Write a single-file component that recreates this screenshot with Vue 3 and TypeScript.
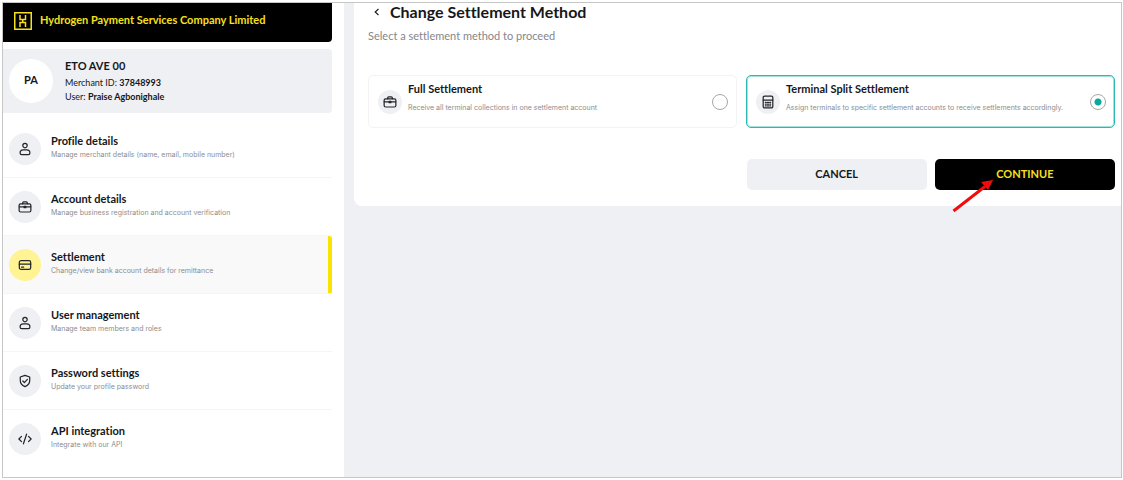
<script setup lang="ts">
import { ref } from 'vue'

type IconName = 'person' | 'briefcase' | 'card' | 'shield' | 'code' | 'calculator'

interface MenuItem {
  title: string
  note: string
  icon: IconName
}

interface Method {
  id: string
  title: string
  note: string
  icon: IconName
}

const menu: MenuItem[] = [
  { title: 'Profile details', note: 'Manage merchant details (name, email, mobile number)', icon: 'person' },
  { title: 'Account details', note: 'Manage business registration and account verification', icon: 'briefcase' },
  { title: 'Settlement', note: 'Change/view bank account details for remittance', icon: 'card' },
  { title: 'User management', note: 'Manage team members and roles', icon: 'person' },
  { title: 'Password settings', note: 'Update your profile password', icon: 'shield' },
  { title: 'API integration', note: 'Integrate with our API', icon: 'code' },
]

const methods: Method[] = [
  { id: 'full', title: 'Full Settlement', note: 'Receive all terminal collections in one settlement account', icon: 'briefcase' },
  { id: 'split', title: 'Terminal Split Settlement', note: 'Assign terminals to specific settlement accounts to receive settlements accordingly.', icon: 'calculator' },
]

const icons: Record<IconName, string[]> = {
  person: [
    'M8 1.6a2.5 2.5 0 1 0 0 5a2.5 2.5 0 1 0 0-5z',
    'M6 9h4c2.200 0 3.600 1.600 3.600 3.500 0 1-.8 1.800-1.800 1.800H4.200c-1 0-1.800-.8-1.800-1.800C2.400 10.600 3.800 9 6 9z',
  ],
  briefcase: [
    'M3 4.300h10a1.700 1.700 0 0 1 1.700 1.700v6a1.700 1.700 0 0 1-1.700 1.700H3A1.700 1.700 0 0 1 1.300 12V6A1.700 1.700 0 0 1 3 4.300z',
    'M5.300 4.300V3.500c0-.8.6-1.300 1.300-1.300h2.800c.7 0 1.300.5 1.300 1.300v.8',
    'M1.500 7.800h13M7 7.400h2v1.400H7z',
  ],
  card: [
    'M3.500 3h9a2 2 0 0 1 2 2v6a2 2 0 0 1-2 2h-9a2 2 0 0 1-2-2V5a2 2 0 0 1 2-2z',
    'M1.500 7h13M4 10.300h2.500',
  ],
  shield: [
    'M8 1.500l5.400 1.900v4c0 3.200-2 5.700-5.400 7.100-3.400-1.400-5.400-3.900-5.400-7.100v-4z',
    'M5.500 8l1.800 1.800 3.400-3.600',
  ],
  code: ['M4 5L1 8l3 3M12 5l3 3-3 3M9.800 2.500l-3.600 11'],
  calculator: [
    'M4 1.300h8a1.500 1.500 0 0 1 1.500 1.500v10.400a1.500 1.500 0 0 1-1.500 1.500H4a1.500 1.500 0 0 1-1.500-1.500V2.800A1.500 1.500 0 0 1 4 1.300z',
    'M2.500 5.800h11M5 8.500h1M7.500 8.500h1M10 8.500h1M5 10.500h1M7.500 10.500h1M10 10.500h1M5 12.500h1M7.500 12.500h1M10 12.500h1',
  ],
}

const active = ref('Settlement')
const selected = ref('split')
</script>

<template>
  <div class="page">
    <div class="frame">
      <aside class="sidebar">
        <header class="brand">
          <svg class="logo" viewBox="0 0 18 18" aria-hidden="true">
            <rect x="0.75" y="0.75" width="16.5" height="16.5" />
            <path d="M6 3v4.500h5.500V3M6 15v-4.500h5.500V15M8.750 7.500v3" />
          </svg>
          <span>Hydrogen Payment Services Company Limited</span>
        </header>

        <section class="merchant">
          <div class="avatar">PA</div>
          <div class="merchant-text">
            <h2>ETO AVE 00</h2>
            <p>Merchant ID: <b>37848993</b></p>
            <p>User: <b>Praise Agbonighale</b></p>
          </div>
        </section>

        <nav class="menu">
          <button
            v-for="item in menu"
            :key="item.title"
            type="button"
            class="menu-item"
            :class="{ active: active === item.title }"
            @click="active = item.title"
          >
            <span class="badge">
              <svg class="icon" viewBox="0 0 16 16" aria-hidden="true">
                <path v-for="d in icons[item.icon]" :key="d" :d="d" />
              </svg>
            </span>
            <span class="menu-text">
              <span class="title">{{ item.title }}</span>
              <span class="note">{{ item.note }}</span>
            </span>
          </button>
        </nav>
      </aside>

      <main class="content">
        <section class="panel">
          <div class="heading">
            <button type="button" class="back" aria-label="Back">
              <svg viewBox="0 0 8 8" aria-hidden="true"><path d="M5.500 1L2.200 4l3.300 3" /></svg>
            </button>
            <h1>Change Settlement Method</h1>
          </div>
          <p class="lead">Select a settlement method to proceed</p>

          <div class="methods">
            <label
              v-for="m in methods"
              :key="m.id"
              class="method"
              :class="{ chosen: selected === m.id }"
              :for="m.id"
            >
              <span class="badge small">
                <svg class="icon" viewBox="0 0 16 16" aria-hidden="true">
                  <path v-for="d in icons[m.icon]" :key="d" :d="d" />
                </svg>
              </span>
              <span class="method-text">
                <span class="title">{{ m.title }}</span>
                <span class="note">{{ m.note }}</span>
              </span>
              <input :id="m.id" v-model="selected" type="radio" name="method" :value="m.id" />
            </label>
          </div>

          <div class="actions">
            <button type="button" class="btn cancel">CANCEL</button>
            <div class="continue-wrap">
              <button type="button" class="btn continue">CONTINUE</button>
              <svg class="pointer" viewBox="0 0 42 34" aria-hidden="true">
                <path d="M1.500 32L33 7.500" />
                <polygon points="41,1 36,11 29,3" />
              </svg>
            </div>
          </div>
        </section>
      </main>
    </div>
  </div>
</template>

<style>
body {
  margin: 0;
}
</style>

<style scoped>
* {
  box-sizing: border-box;
}
.page {
  min-height: 100vh;
  display: flex;
  padding: 2px 1px 2px 2px;
  background: #fff;
  color: #16171a;
  font-family: Lato, "Liberation Sans", sans-serif;
  font-variant-ligatures: none;
}
h1,
h2,
p {
  margin: 0;
}
button {
  font: inherit;
  color: inherit;
  border: 0;
  padding: 0;
  cursor: pointer;
}
.frame {
  flex: 1;
  display: flex;
  border: 1px solid #c6c6c6;
  background: #eff0f3;
}
.sidebar {
  flex: 0 0 341px;
  padding-right: 12px;
  background: #fff;
}
.brand {
  height: 39px;
  display: flex;
  align-items: center;
  gap: 8px;
  padding: 0 11px 4px;
  border-radius: 0 0 4px 0;
  background: #000;
  color: #f7e01c;
  font-size: 11px;
  font-weight: 700;
}
.brand span {
  padding-bottom: 2px;
}
.logo {
  width: 18px;
  height: 18px;
  fill: none;
  stroke: #f7e01c;
  stroke-width: 1.5;
}
.merchant {
  height: 64px;
  margin-top: 7px;
  display: flex;
  align-items: center;
  gap: 12px;
  padding-left: 6px;
  border-radius: 0 4px 4px 0;
  background: #eff0f3;
  font-size: 9px;
  line-height: 14px;
}
.merchant-text {
  padding-bottom: 1px;
}
.merchant h2 {
  padding-bottom: 2px;
  font-size: 11px;
  line-height: 16px;
}
.avatar {
  width: 44px;
  height: 44px;
  padding-bottom: 2px;
  border-radius: 50%;
  display: grid;
  place-items: center;
  background: #fff;
  font-size: 11px;
  font-weight: 700;
}
.menu {
  margin-top: 7px;
}
.menu-item {
  width: 100%;
  height: 58px;
  display: flex;
  align-items: center;
  gap: 10px;
  padding-left: 6px;
  background: none;
  border-bottom: 1px solid #f5f5f6;
  text-align: left;
}
.menu-item:last-child {
  border-bottom-color: transparent;
}
.menu-item.active {
  background: #f9f9f9;
  border-right: 4px solid #fbe300;
  border-radius: 0 3px 3px 0;
}
.badge {
  flex: none;
  width: 32px;
  height: 32px;
  border-radius: 50%;
  display: grid;
  place-items: center;
  background: #eff0f3;
}
.active .badge {
  background: #fff394;
}
.badge.small {
  width: 24px;
  height: 24px;
}
.icon {
  width: 14px;
  height: 14px;
  fill: none;
  stroke: #222428;
  stroke-width: 1.4;
  stroke-linecap: round;
  stroke-linejoin: round;
}
.menu-text {
  display: flex;
  flex-direction: column;
  padding-bottom: 3px;
}
.title {
  font-size: 11px;
  line-height: 16px;
  font-weight: 700;
}
.note {
  font-family: Inter, "Liberation Sans", sans-serif;
  font-size: 7px;
  line-height: 12px;
  color: #8c8d90;
}
.content {
  flex: 1;
  min-width: 0;
  padding-left: 10px;
}
.panel {
  padding: 0 6px 16px 14px;
  border-radius: 0 0 0 8px;
  background: #fff;
}
.heading {
  display: flex;
  align-items: center;
  gap: 8px;
  padding-left: 4px;
}
.heading h1 {
  font-size: 16px;
  line-height: 18px;
  font-weight: 700;
}
.back {
  width: 10px;
  height: 10px;
  display: grid;
  place-items: center;
  background: none;
}
.back svg {
  width: 8px;
  height: 8px;
  fill: none;
  stroke: #222428;
  stroke-width: 1.2;
}
.lead {
  margin-top: 7px;
  font-size: 11px;
  line-height: 16px;
  color: #85868a;
}
.methods {
  margin-top: 31px;
  display: grid;
  grid-template-columns: 1fr 1fr;
  gap: 9px;
}
.method {
  height: 53px;
  display: flex;
  align-items: center;
  gap: 6px;
  padding: 0 8px 0 9px;
  border: 1px solid #f3f3f5;
  border-radius: 5px;
  cursor: pointer;
}
.method.chosen {
  border-color: #2bbab1;
  box-shadow: inset 0 0 0 1px #a5e2de;
}
.method-text {
  flex: 1;
  display: flex;
  flex-direction: column;
  gap: 5px;
  padding-bottom: 8px;
}
.method input {
  appearance: none;
  flex: none;
  width: 16px;
  height: 16px;
  margin: 0;
  border: 1px solid #a5a6a8;
  border-radius: 50%;
  background: #fff;
}
.method input:checked {
  background: radial-gradient(circle, #0aa9a0 3px, #fff 4px);
}
.actions {
  margin: 31px 0 0 auto;
  width: 50%;
  display: grid;
  grid-template-columns: 1fr 1fr;
  gap: 8px;
  padding-left: 5px;
}
.btn {
  width: 100%;
  height: 31px;
  padding-bottom: 3px;
  border-radius: 5px;
  font-size: 11px;
  font-weight: 700;
}
.cancel {
  background: #eff0f3;
}
.continue {
  background: #000;
  color: #f7e01c;
}
.continue-wrap {
  position: relative;
}
.pointer {
  position: absolute;
  left: 17px;
  top: 20px;
  width: 42px;
  height: 34px;
  fill: #f40b0b;
  pointer-events: none;
}
.pointer path {
  stroke: #f40b0b;
  stroke-width: 3;
}
</style>
